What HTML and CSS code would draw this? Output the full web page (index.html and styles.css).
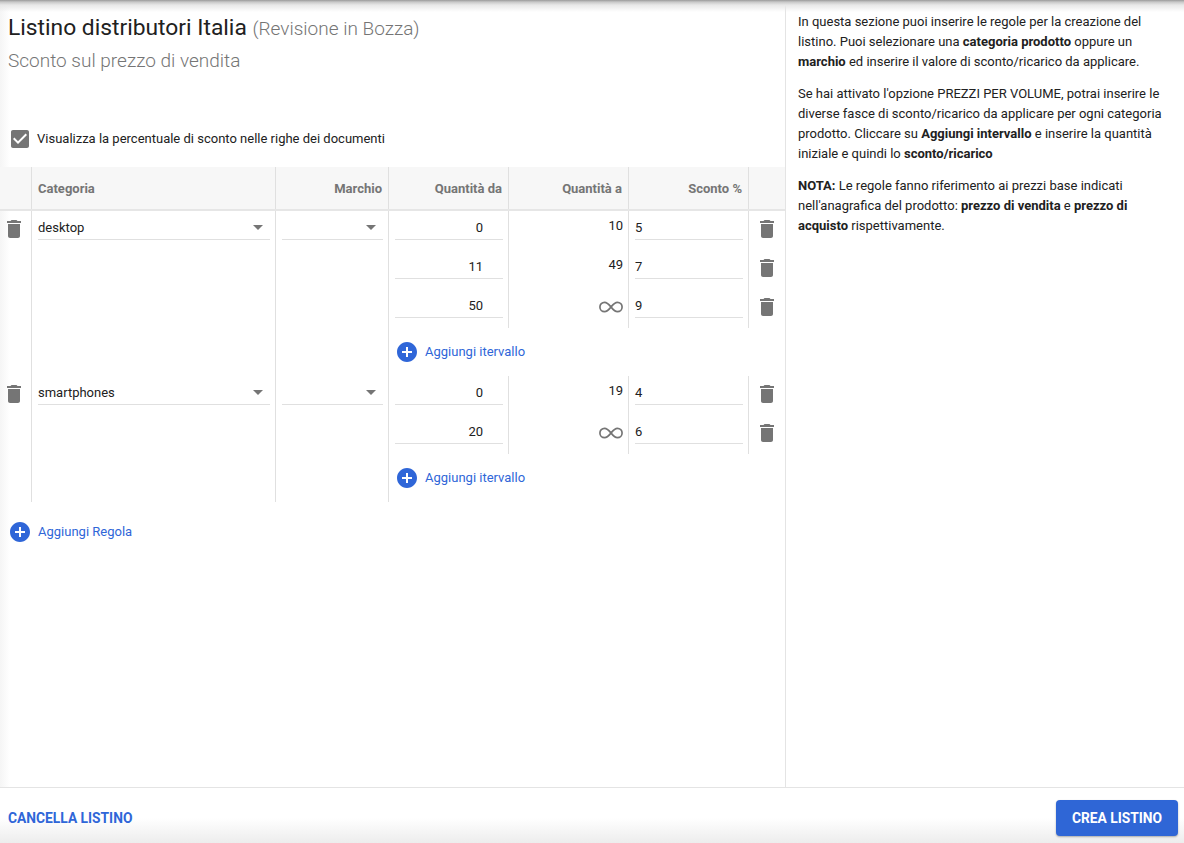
FILE: index.html
```html
<!DOCTYPE html>
<html lang="it">
<head>
<meta charset="utf-8">
<title>Listino distributori Italia</title>
<link rel="stylesheet" href="styles.css">
</head>
<body>
<svg class="defs" width="0" height="0" aria-hidden="true">
  <symbol id="trash" viewBox="0 0 24 24"><path d="M6 19c0 1.1.9 2 2 2h8c1.1 0 2-.9 2-2V7H6v12zM19 4h-3.5l-1-1h-5l-1 1H5v2h14V4z"/></symbol>
  <symbol id="add" viewBox="0 0 24 24"><path d="M12 2C6.48 2 2 6.48 2 12s4.48 10 10 10 10-4.48 10-10S17.52 2 12 2zm5 11h-4v4h-2v-4H7v-2h4V7h2v4h4v2z"/></symbol>
  <symbol id="inf" viewBox="0 0 24 24"><path d="M12 12c-2-2.5-3.6-4.7-6.4-4.7a4.7 4.7 0 0 0 0 9.4c2.8 0 4.4-2.2 6.4-4.7s3.6-4.7 6.4-4.7a4.7 4.7 0 0 1 0 9.4c-2.8 0-4.4-2.2-6.4-4.7z"/></symbol>
</svg>
<div class="app">
  <div class="main">
    <section class="content">
      <header class="head">
        <h1 class="title">Listino distributori Italia <span class="status">(Revisione in Bozza)</span></h1>
        <h2 class="subtitle">Sconto sul prezzo di vendita</h2>
      </header>
      <div class="check-row">
        <svg class="icon gray" viewBox="0 0 24 24"><path d="M19 3H5c-1.11 0-2 .9-2 2v14c0 1.1.89 2 2 2h14c1.11 0 2-.9 2-2V5c0-1.1-.89-2-2-2zm-9 14l-5-5 1.41-1.41L10 14.17l7.59-7.59L19 8l-9 9z"/></svg>
        <span>Visualizza la percentuale di sconto nelle righe dei documenti</span>
      </div>

      <div class="table-head">
        <div class="th th-blank"></div>
        <div class="th th-left">Categoria</div>
        <div class="th">Marchio</div>
        <div class="th">Quantità da</div>
        <div class="th">Quantità a</div>
        <div class="th">Sconto %</div>
        <div class="th th-end"></div>
      </div>

      <div class="rule">
        <div class="cell-del"><svg class="icon gray"><use href="#trash"/></svg></div>
        <div class="cell-cat"><div class="select"><span>desktop</span><i class="caret"></i></div></div>
        <div class="cell-brand"><div class="select"><span></span><i class="caret"></i></div></div>
        <div class="cell-bands">
          <div class="band">
            <div class="c-from"><div class="field">0</div></div>
            <div class="c-to">10</div>
            <div class="c-disc"><div class="field left">5</div></div>
            <div class="c-del"><svg class="icon gray"><use href="#trash"/></svg></div>
          </div>
          <div class="band">
            <div class="c-from"><div class="field">11</div></div>
            <div class="c-to">49</div>
            <div class="c-disc"><div class="field left">7</div></div>
            <div class="c-del"><svg class="icon gray"><use href="#trash"/></svg></div>
          </div>
          <div class="band">
            <div class="c-from"><div class="field">50</div></div>
            <div class="c-to"><svg class="icon inf"><use href="#inf"/></svg></div>
            <div class="c-disc"><div class="field left">9</div></div>
            <div class="c-del"><svg class="icon gray"><use href="#trash"/></svg></div>
          </div>
          <div class="add-band"><svg class="icon blue"><use href="#add"/></svg><span>Aggiungi itervallo</span></div>
        </div>
      </div>

      <div class="rule">
        <div class="cell-del"><svg class="icon gray"><use href="#trash"/></svg></div>
        <div class="cell-cat"><div class="select"><span>smartphones</span><i class="caret"></i></div></div>
        <div class="cell-brand"><div class="select"><span></span><i class="caret"></i></div></div>
        <div class="cell-bands">
          <div class="band">
            <div class="c-from"><div class="field">0</div></div>
            <div class="c-to">19</div>
            <div class="c-disc"><div class="field left">4</div></div>
            <div class="c-del"><svg class="icon gray"><use href="#trash"/></svg></div>
          </div>
          <div class="band">
            <div class="c-from"><div class="field">20</div></div>
            <div class="c-to"><svg class="icon inf"><use href="#inf"/></svg></div>
            <div class="c-disc"><div class="field left">6</div></div>
            <div class="c-del"><svg class="icon gray"><use href="#trash"/></svg></div>
          </div>
          <div class="add-band"><svg class="icon blue"><use href="#add"/></svg><span>Aggiungi itervallo</span></div>
        </div>
      </div>

      <div class="add-rule"><svg class="icon blue"><use href="#add"/></svg><span>Aggiungi Regola</span></div>
    </section>

    <aside class="help">
      <p>In questa sezione puoi inserire le regole per la creazione del listino. Puoi selezionare una <b>categoria prodotto</b> oppure un <b>marchio</b> ed inserire il valore di sconto/ricarico da applicare.</p>
      <p>Se hai attivato l'opzione PREZZI PER VOLUME, potrai inserire le diverse fasce di sconto/ricarico da applicare per ogni categoria prodotto. Cliccare su <b>Aggiungi intervallo</b> e inserire la quantità iniziale e quindi lo <b>sconto/ricarico</b></p>
      <p><b>NOTA:</b> Le regole fanno riferimento ai prezzi base indicati nell'anagrafica del prodotto: <b>prezzo di vendita</b> e <b>prezzo di acquisto</b> rispettivamente.</p>
    </aside>
  </div>
  <footer class="footer">
    <a class="cancel">CANCELLA LISTINO</a>
    <button class="create">CREA LISTINO</button>
  </footer>
</div>
</body>
</html>
```
FILE: styles.css
```css
* { box-sizing: border-box; }
html, body { margin: 0; padding: 0; height: 100%; }
body { font-family: Roboto, "Liberation Sans", sans-serif; font-size: 13px; color: #212121; background: #fff; overflow: hidden; }
.defs { position: absolute; }
.app { display: flex; flex-direction: column; height: 843px; position: relative; }
.app::before { content: ""; position: absolute; z-index: 2; left: 0; right: 0; top: 0; height: 12px; background: linear-gradient(to bottom, #9a9a9a 0, #c8c8c8 2px, #e8e8e8 5px, rgba(255,255,255,0) 12px); pointer-events: none; }
.main { flex: 1; display: flex; min-height: 0; position: relative; }
.content { width: 785px; flex: none; background: linear-gradient(to right, #f5f5f5 0, #fff 10px); }
.help { flex: 1; border-left: 1px solid #e4e4e4; padding: 12px 10px 0 12px; line-height: 20px; color: #212121; }
.help p { margin: 0 0 12px; }
.help b { font-weight: 700; }

.head { height: 125px; padding: 15px 0 0 8px; }
.title { margin: 0; font-size: 22.8px; line-height: 26px; font-weight: 400; color: #212121; }
.status { font-size: 19px; font-weight: 300; color: #757575; }
.subtitle { margin: 6px 0 0; font-size: 19px; line-height: 26px; font-weight: 300; color: #757575; }

.icon { display: block; width: 24px; height: 24px; flex: none; }
.gray { fill: #757575; }
.blue { fill: #2f66d8; }
.inf { fill: none; stroke: #757575; stroke-width: 1.7; }

.check-row { display: flex; align-items: center; height: 28px; padding-left: 8px; gap: 5px; margin-bottom: 14px; color: #212121; }
.check-row span { padding-bottom: 2px; }

.table-head { display: grid; grid-template-columns: 32px 244px 113px 120px 120px 120px 36px; height: 44px; background: #f7f7f7; border-bottom: 2px solid #e6e6e6; }
.th { display: flex; align-items: center; justify-content: flex-end; padding: 0 6px; font-size: 13px; font-weight: 700; color: #757575; border-right: 1px solid #e0e0e0; }
.th-left { justify-content: flex-start; }
.th-end { border-right: 0; }

.rule { display: grid; grid-template-columns: 32px 244px 113px 396px; }
.cell-del { border-right: 1px solid #e0e0e0; padding: 6px 0 0 2px; }
.cell-cat { border-right: 1px solid #e0e0e0; padding: 0 5px 0 6px; }
.cell-brand { border-right: 1px solid #e0e0e0; padding: 0 5px 0 6px; }
.select { height: 29px; border-bottom: 1px solid #e0e0e0; display: flex; align-items: center; justify-content: space-between; padding: 4px 7px 0 0; }
.caret { width: 0; height: 0; border-left: 5.5px solid transparent; border-right: 5.5px solid transparent; border-top: 5.5px solid #757575; }

.band { display: grid; grid-template-columns: 120px 120px 120px 36px; height: 39px; }
.c-from { padding: 0 5px 0 6px; border-right: 1px solid #e0e0e0; }
.c-to { padding: 6px 5px 0 0; border-right: 1px solid #e0e0e0; line-height: 18px; display: flex; justify-content: flex-end; align-items: flex-start; }
.c-disc { padding: 0 5px 0 6px; border-right: 1px solid #e0e0e0; }
.c-del { padding: 6px 0 0 6px; }
.field { height: 29px; border-bottom: 1px solid #e0e0e0; text-align: right; padding: 8px 20px 0 0; line-height: 18px; }
.field.left { text-align: left; padding-right: 0; }

.add-band, .add-rule { display: flex; align-items: center; color: #2f66d8; font-size: 13px; }
.add-band span, .add-rule span { padding-bottom: 2px; }
.add-band { height: 48px; padding-left: 6px; gap: 6px; }
.add-rule { padding-left: 8px; gap: 6px; height: 24px; margin-top: 18px; }

.footer { flex: none; height: 56px; border-top: 1px solid #e4e4e4; display: flex; align-items: center; justify-content: space-between; padding: 4px 6px 0 8px; background: linear-gradient(to bottom, #fff 0, #fff 30px, #ececec 56px); }
.cancel { font-size: 13.8px; font-weight: 700; color: #2f66d8; }
.create { width: 122px; height: 36px; border: 0; border-radius: 4px; background: #2f66d6; color: #fff; font-family: inherit; font-size: 13.8px; font-weight: 700; padding: 0; box-shadow: 0 1px 2px rgba(0,0,0,.3); }
```
